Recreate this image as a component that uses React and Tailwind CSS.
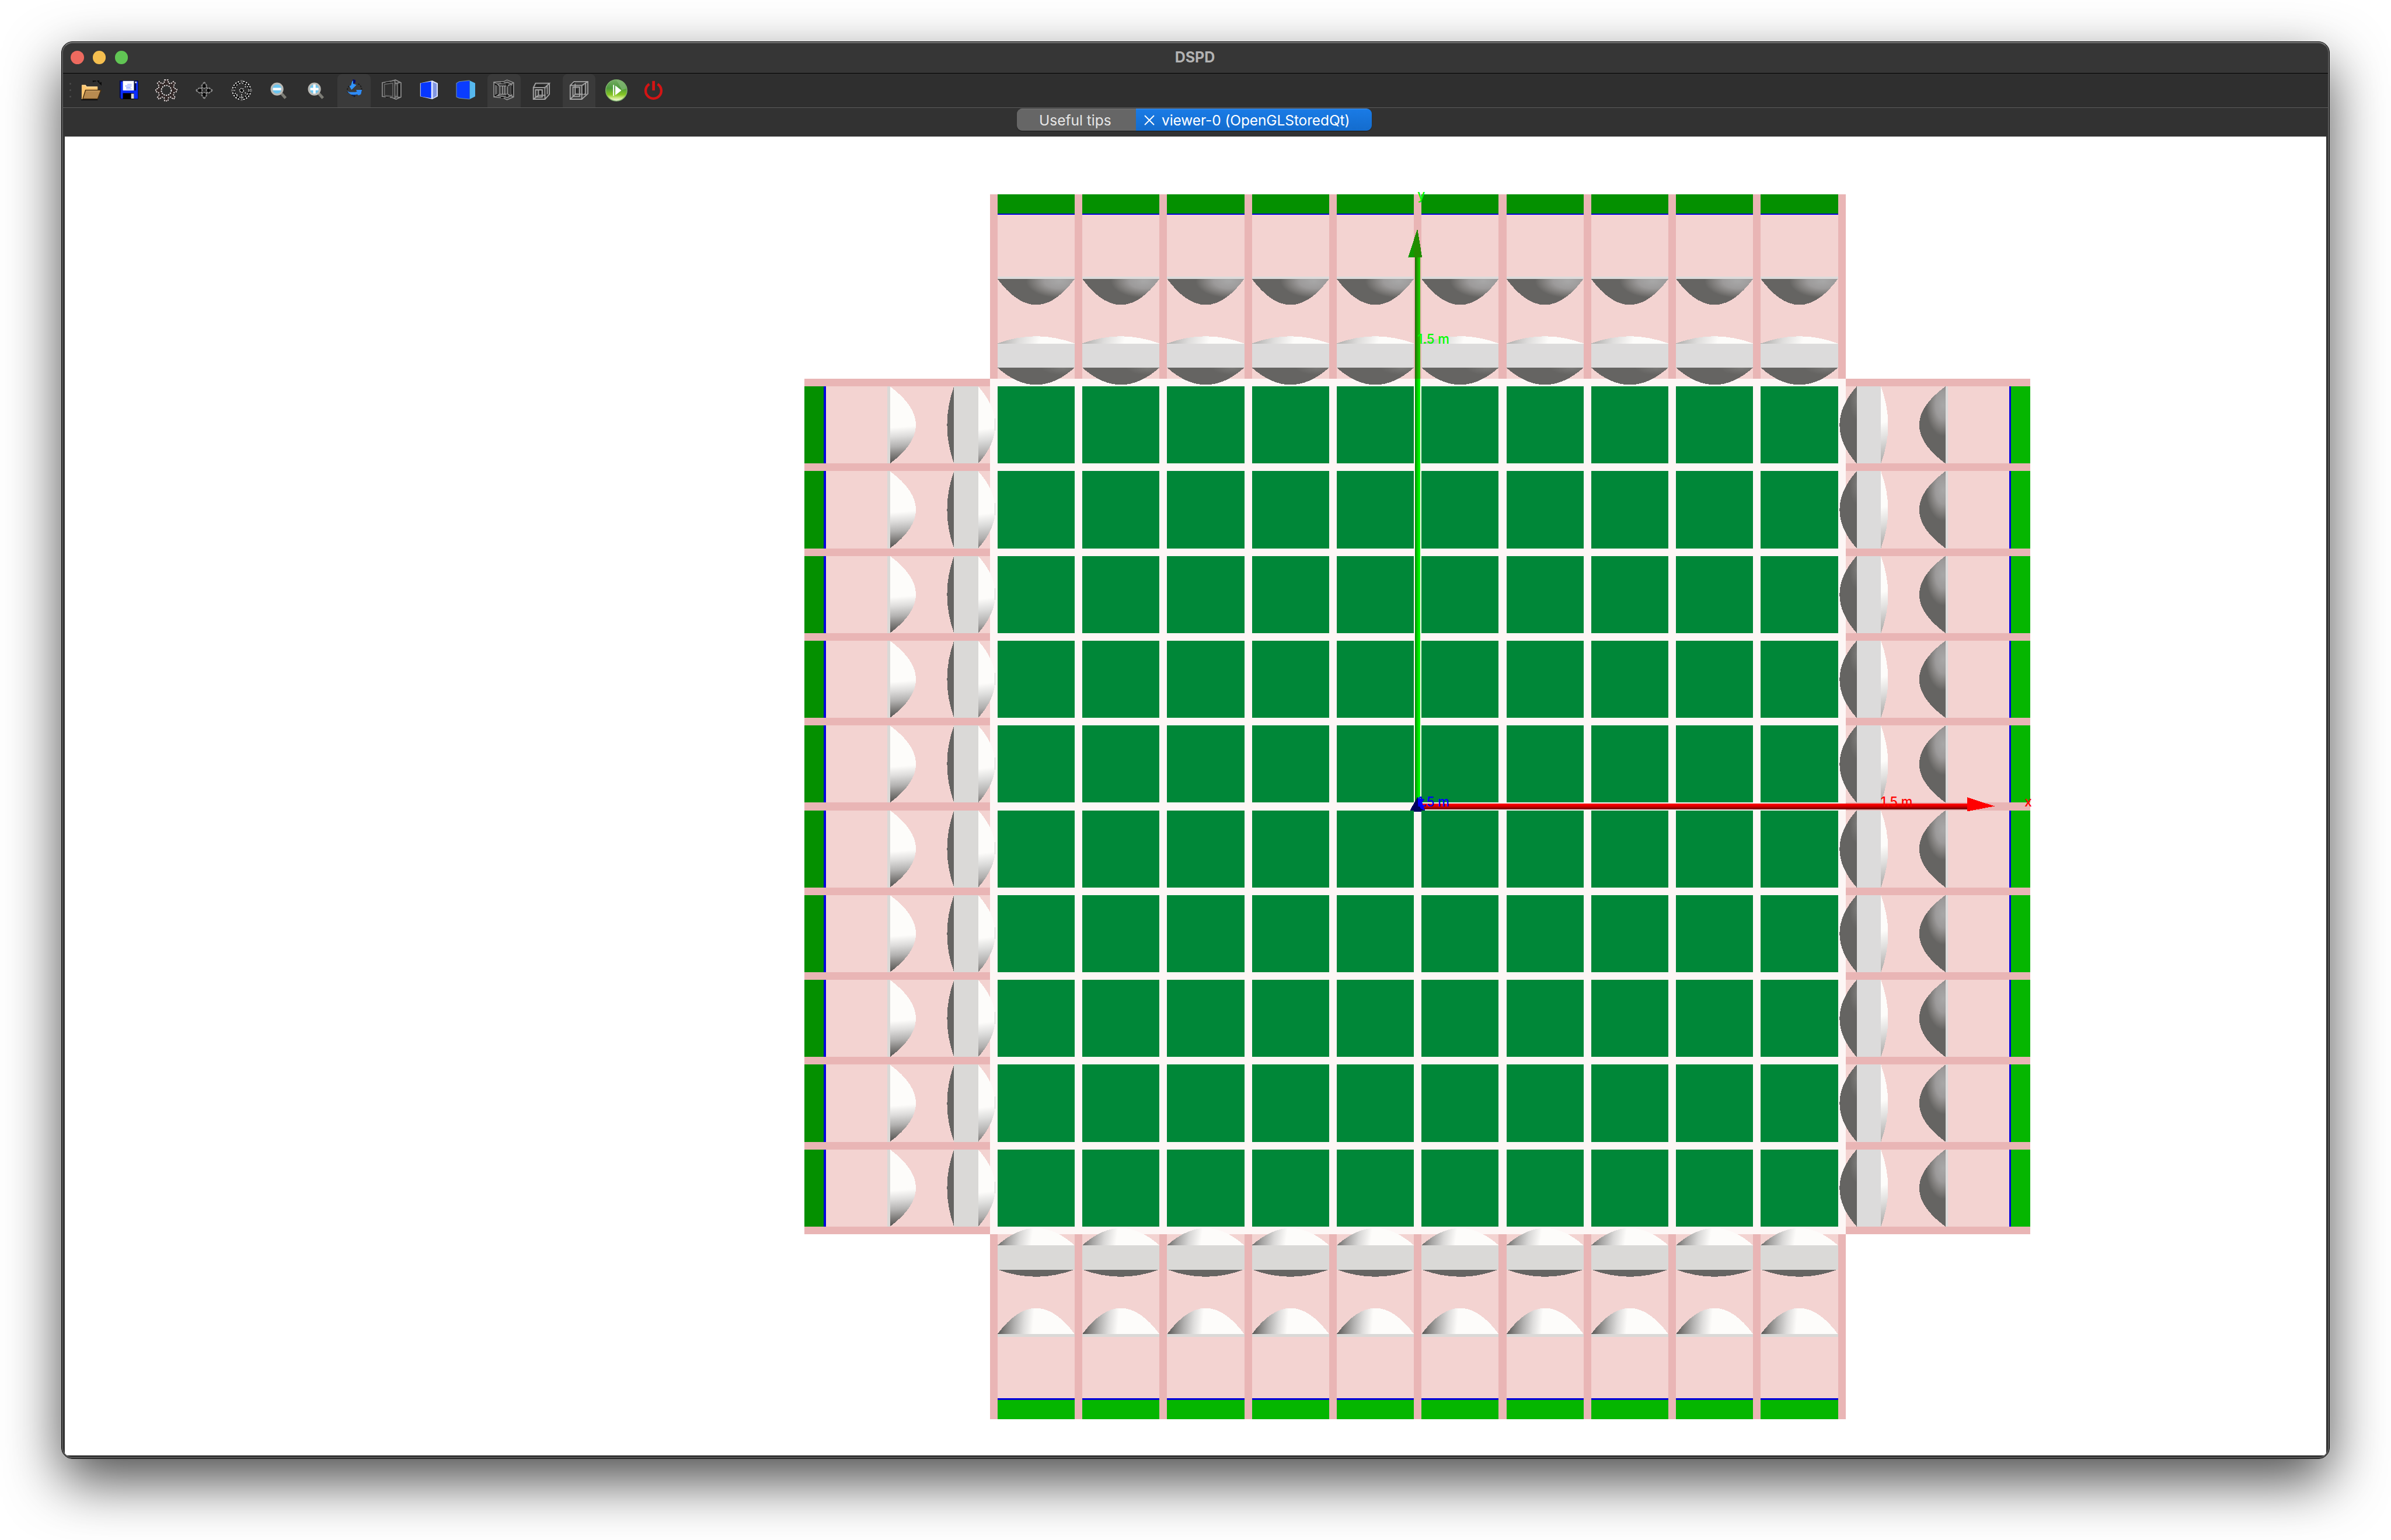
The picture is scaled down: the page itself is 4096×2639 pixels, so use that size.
const TILES = Array.from({ length: 10 }, (_, i) => i);
const PITCH = 153.8;
const CELL = 139.8;
const GRID_X = 1809;
const GRID_Y = 701;

function Icon({ children }) {
  return (
    <svg viewBox="0 0 40 40" className="size-[37.8px]" fill="none">
      {children}
    </svg>
  );
}

function OpenIcon() {
  return (
    <Icon>
      <path d="M23 5v-2h5M30 3h3v3M34 6l3 3v-4" stroke="#0a0a0a" strokeWidth="2" />
      <path d="M2 10h7l2 3h20v7H9L4 36H2z" fill="#ffc670" />
      <path d="M3 11h6l2 3h19" stroke="#ffdc9c" strokeWidth="1.5" />
      <path d="M9 19.500h28l-6 16H4z" fill="#b88b50" stroke="#4a3010" strokeWidth="1.500" />
      <path d="M1 37h30" stroke="#111" strokeWidth="2" />
      <path d="M10 21h25" stroke="#d8ab6c" strokeWidth="1" />
    </Icon>
  );
}

function SaveIcon() {
  return (
    <Icon>
      <path d="M3 2h34v34H6l-3-3z" fill="#000a50" />
      <path d="M5 4h4v16h24V4h3v31H6l-1-2z" fill="#0a2cff" />
      <path d="M9 3h20v17H9z" fill="#fff" />
      <path d="M31 4h3v3h-3z" fill="#ddd" />
      <path d="M17 9h8M13 12h12M15 15h8M15 17.500h10" stroke="#9fb0ff" strokeWidth="1.700" />
      <path d="M9 25h20v11H9z" fill="#000" />
      <path d="M24 26h5v9h-5z" fill="#d8d8d0" />
    </Icon>
  );
}

function GearIcon() {
  return (
    <Icon>
      <path
        d="M17 1h6l1 6 4 1 5-4 3 3-3 5 1 4 5 2v4l-5 2-1 4 3 5-3 3-5-4-4 1-1 6h-6l-1-6-4-1-5 4-3-3 3-5-1-4-5-2v-4l5-2 1-4-3-5 3-3 5 4 4-1z"
        fill="#322827"
        stroke="#e6dede"
        strokeWidth="2"
        strokeDasharray="2.400 1.800"
      />
      <circle cx="20" cy="20" r="9" fill="#2f2f2f" stroke="#f2f2f2" strokeWidth="2" strokeDasharray="2.400 1.800" />
    </Icon>
  );
}

function MoveIcon() {
  return (
    <Icon>
      <path d="M20 5l5 7-2 4h-6l-2-4zM20 35l5-7-2-4h-6l-2 4zM5 20l7-5 4 2v6l-4 2zM35 20l-7-5-4 2v6l4 2z" fill="#151515" stroke="#8e8e8e" strokeWidth="2.200" strokeDasharray="3.500 1.200" />
      <path d="M18 11h4v4h-4zM18 25h4v4h-4zM11 18h4v4h-4zM25 18h4v4h-4z" fill="#000" />
    </Icon>
  );
}

function PickIcon() {
  return (
    <Icon>
      <circle cx="20" cy="20" r="15" stroke="#000" strokeWidth="4" />
      <circle cx="20" cy="20" r="16.500" stroke="#f0f0f0" strokeWidth="2" strokeDasharray="2.800 2.200" />
      <circle cx="20" cy="20" r="13" stroke="#d4d4d4" strokeWidth="1.800" strokeDasharray="2.400 3.200" />
      <path d="M20 1v6M20 33v6M1 20h6M33 20h6" stroke="#5e5e5e" strokeWidth="4" />
      <circle cx="20" cy="20" r="3.500" fill="#000" stroke="#e4e4e4" strokeWidth="1.800" strokeDasharray="2 1.500" />
      <path d="M20 27v6M26 24l4 3M26 14l3-2M12 27l-2 3" stroke="#ddd" strokeWidth="1.800" strokeDasharray="2 2" />
    </Icon>
  );
}

function ZoomIcon({ plus }) {
  return (
    <Icon>
      <path d="M24 25l8 9" stroke="#7d7d76" strokeWidth="5" />
      <circle cx="16.500" cy="17.500" r="10" fill="#6cc6f0" stroke="#b9b9b5" strokeWidth="3.500" />
      <path d="M9 17.500h15" stroke="#fff" strokeWidth="4.500" />
      {plus && <path d="M16.500 9v17" stroke="#fff" strokeWidth="4.500" />}
    </Icon>
  );
}

function SpinIcon() {
  return (
    <Icon>
      <path d="M11 12c-4 4-5 9-1 13M27 8c6 4 8 9 5 16M15 28l5 3 4-3" stroke="#1c1c1c" strokeWidth="2" strokeDasharray="3 2" />
      <path d="M17 0l5 1v5l-4 2z" fill="#000a70" />
      <path d="M16 4l2-2v6l6 2-9 9-4-7 3-1z" fill="#3195ff" />
      <path d="M7 21l4 2h11l3-1-2-3h11l-2 8-4 2-3-2c-5 3-13 2-18-6z" fill="#2f8bf5" />
      <path d="M15 28h8l-4 3z" fill="#0a1c50" />
    </Icon>
  );
}

function BoxOutlineIcon() {
  return (
    <Icon>
      <path d="M3 6l17-3 7-2 10 5v26l-9 4-7-3-18-2zM26 2v33M26 7h4v25h-4M30 7l6-2M30 32l6 1" stroke="#8f8f8f" strokeWidth="1.700" />
      <path d="M7 9l15-2v24L7 29z" stroke="#6c6c6c" strokeWidth="1.500" />
      <path d="M9 6l8-1M9 32l8 1M28 11v17M34 9v21" stroke="#080808" strokeWidth="1.300" />
    </Icon>
  );
}

function BoxFacesIcon() {
  return (
    <Icon>
      <path d="M4 7l22-5 10 5v24l-10 5-22-5z" fill="#dfe6ff" />
      <path d="M5 7l19-3v30L5 31z" fill="#0636ff" />
      <path d="M27 5l7 3v22l-7 4z" fill="#8196e2" />
    </Icon>
  );
}

function BoxSolidIcon() {
  return (
    <Icon>
      <path d="M2 7l5-3 19-2v34l-19-2-5-2z" fill="#0a3cff" />
      <path d="M26 2l10 5v24l-10 5z" fill="#56b8ee" />
      <path d="M2 32V7l5-3 19-2M2 32l5 2 19 2" stroke="#6c8aa0" strokeWidth="1.200" />
    </Icon>
  );
}

function BoxHiddenIcon() {
  return (
    <Icon>
      <path d="M2 5l18-1 6-3 12 5v26l-12 5-6-3-18-2zM6 9l13-2 8-2 7 4v20l-7 4-8-2-13-2zM13 12h14v15H13zM2 5l11 7M2 32l11-5M38 6l-11 6M38 32l-11-5" stroke="#9a9a9a" strokeWidth="1.500" />
      <path d="M18 12v15M22 12v15" stroke="#a8a8a8" strokeWidth="1.500" />
      <path d="M4 8l5 3M4 30l5-3M15 6h5M15 33h5M26 8v5M26 27v5M35 11v16" stroke="#050505" strokeWidth="2" />
    </Icon>
  );
}

function BoxWireIcon({ large }) {
  return large ? (
    <Icon>
      <path d="M4 11h21v25H4zM4 11l7-7h25v22L25 36M25 11l11-7M9 14h12v17H9zM13 8v19M13 27h20M4 36l9-9M32 7v20" stroke="#a4a4a4" strokeWidth="1.900" />
      <path d="M8 9l4-3M28 12v15M16 17v8" stroke="#111" strokeWidth="1.500" />
    </Icon>
  ) : (
    <Icon>
      <path d="M5 15h21v21H5zM5 15l4-8h25l-8 8M34 7v20l-8 9M9 19h12v13H9zM5 36l9-7h11M14 18v11M30 12v15" stroke="#a4a4a4" strokeWidth="2" />
      <path d="M10 12h14M18 20v7M28 17v10" stroke="#111" strokeWidth="1.500" />
    </Icon>
  );
}

function RunIcon() {
  return (
    <Icon>
      <defs>
        <linearGradient id="run" x1="0" y1="0" x2="0" y2="1">
          <stop offset="0" stopColor="#74ab65" />
          <stop offset="0.400" stopColor="#4d9a3c" />
          <stop offset="0.700" stopColor="#86c522" />
          <stop offset="0.860" stopColor="#cfe98a" />
          <stop offset="1" stopColor="#f4f8e4" />
        </linearGradient>
      </defs>
      <circle cx="20" cy="20" r="19.300" fill="url(#run)" stroke="#7fb36d" strokeWidth="1.400" />
      <path d="M20 1a19 19 0 0 1 18 16l-8 2z" fill="#85b876" opacity="0.700" />
      <path d="M15 10v20" stroke="#fff" strokeWidth="2" />
      <path d="M18.500 12v16l10-8z" fill="#fff" stroke="#fff" strokeWidth="1" />
    </Icon>
  );
}

function PowerIcon() {
  return (
    <Icon>
      <path d="M12 8.500a14.200 14.200 0 1 0 15 0" stroke="#d41414" strokeWidth="4.600" />
      <path d="M19.700 3v17" stroke="#d41414" strokeWidth="5" />
    </Icon>
  );
}

const TOOLS = [
  { name: "Open", icon: <OpenIcon /> },
  { name: "Save", icon: <SaveIcon /> },
  { name: "Run settings", icon: <GearIcon /> },
  { name: "Move", icon: <MoveIcon /> },
  { name: "Pick", icon: <PickIcon /> },
  { name: "Zoom out", icon: <ZoomIcon /> },
  { name: "Zoom in", icon: <ZoomIcon plus /> },
  { name: "Rotate", icon: <SpinIcon />, active: true },
  { name: "Hidden line removal", icon: <BoxOutlineIcon /> },
  { name: "Hidden line and surface removal", icon: <BoxFacesIcon /> },
  { name: "Surfaces", icon: <BoxSolidIcon /> },
  { name: "Wireframe", icon: <BoxHiddenIcon />, active: true },
  { name: "Perspective", icon: <BoxWireIcon /> },
  { name: "Orthographic", icon: <BoxWireIcon large />, active: true },
  { name: "Run beam on", icon: <RunIcon /> },
  { name: "Exit", icon: <PowerIcon /> },
];

function TitleBar() {
  return (
    <div className="relative flex h-[54px] items-center justify-center border-b border-black bg-[#363636]">
      <div className="absolute left-[15px] flex gap-[15.100px]">
        <span className="size-[22.700px] rounded-full bg-[#ed6a5f]" />
        <span className="size-[22.700px] rounded-full bg-[#f5bf4f]" />
        <span className="size-[22.700px] rounded-full bg-[#61c554]" />
      </div>
      <span className="-translate-x-[1px] text-[25px] leading-none font-bold text-[#b3b3b3]">DSPD</span>
    </div>
  );
}

function Toolbar() {
  return (
    <div className="flex h-[59px] border-b border-[#5c5c5c] bg-[#2f2f2f] pl-[13px]">
      <div className="flex w-[5.700px] flex-col items-start justify-center gap-[8.300px] pb-px">
        <span className="size-[3px] rounded-full bg-[#4c4c4c]" />
        <span className="size-[3px] rounded-full bg-[#4c4c4c]" />
        <span className="size-[3px] rounded-full bg-[#4c4c4c]" />
      </div>
      {TOOLS.map((t) => (
        <div key={t.name} className="flex w-[64.236px] justify-center pt-px">
          <button
            aria-label={t.name}
            className={`flex h-[56.700px] w-[56.700px] items-center justify-center rounded-t-[8px] ${t.active ? "bg-[#3a3a3a]" : ""}`}
          >
            {t.icon}
          </button>
        </div>
      ))}
    </div>
  );
}

function TabStrip() {
  return (
    <div className="flex h-[49px] items-start justify-center bg-[#323232] pt-px pr-[4px]">
      <div className="flex h-[38px] w-[608px] overflow-hidden rounded-[9px] text-[24.500px] leading-none shadow-[0_1px_1px_rgba(0,0,0,0.5)]">
        <div className="flex w-[204px] items-center border-t border-[#7c7c7c] bg-[#666] pt-px pl-[38px] whitespace-nowrap text-[#e6e6e6]">
          Useful tips
        </div>
        <div className="flex flex-1 items-center border-t border-[#4f9bf0] bg-linear-to-b from-[#1a7be6] to-[#146ccd] pt-px pl-[14px] tracking-[-0.100px] whitespace-nowrap text-white">
          <svg viewBox="0 0 18 18" className="mr-[12px] size-[18px]" stroke="#fff" strokeWidth="1.900">
            <path d="M1 1l16 16M17 1L1 17" />
          </svg>
          viewer-0 (OpenGLStoredQt)
        </div>
      </div>
    </div>
  );
}

function Defs() {
  return (
    <defs>
      <radialGradient id="downLens" gradientUnits="userSpaceOnUse" cx="0" cy="0" r="1" gradientTransform="translate(112 4) scale(60 30)">
        <stop offset="0" stopColor="#a8a8a8" />
        <stop offset="0.450" stopColor="#9c9a9a" />
        <stop offset="0.750" stopColor="#7f7d7b" />
        <stop offset="1" stopColor="#656462" />
      </radialGradient>
      <radialGradient id="downCap" gradientUnits="userSpaceOnUse" cx="0" cy="0" r="1" gradientTransform="translate(118 0) scale(38 13)">
        <stop offset="0" stopColor="#7a7977" />
        <stop offset="1" stopColor="#656462" />
      </radialGradient>
      <radialGradient id="leftLens" gradientUnits="userSpaceOnUse" cx="0" cy="0" r="1" gradientTransform="translate(44 34) scale(31 56)">
        <stop offset="0" stopColor="#a8a8a8" />
        <stop offset="0.450" stopColor="#9c9a9a" />
        <stop offset="0.750" stopColor="#7f7d7b" />
        <stop offset="1" stopColor="#656462" />
      </radialGradient>
      <radialGradient id="leftCap" gradientUnits="userSpaceOnUse" cx="0" cy="0" r="1" gradientTransform="translate(31 24) scale(13 36)">
        <stop offset="0" stopColor="#7a7977" />
        <stop offset="1" stopColor="#656462" />
      </radialGradient>
      <linearGradient id="rightLens" gradientUnits="userSpaceOnUse" x1="0" y1="0" x2="11" y2="138">
        <stop offset="0.540" stopColor="#fdfcfa" />
        <stop offset="0.660" stopColor="#dedddc" />
        <stop offset="0.790" stopColor="#b3b2b1" />
        <stop offset="0.890" stopColor="#858381" />
        <stop offset="1" stopColor="#555452" />
      </linearGradient>
      <linearGradient id="rightCap" gradientUnits="userSpaceOnUse" x1="0" y1="0" x2="16" y2="138">
        <stop offset="0.560" stopColor="#fdfcfa" />
        <stop offset="0.700" stopColor="#dededd" />
        <stop offset="0.880" stopColor="#b0afae" />
        <stop offset="1" stopColor="#777573" />
      </linearGradient>
      <linearGradient id="upLens" gradientUnits="userSpaceOnUse" x1="0" y1="0" x2="140" y2="11">
        <stop offset="0" stopColor="#555452" />
        <stop offset="0.100" stopColor="#858381" />
        <stop offset="0.210" stopColor="#b3b2b1" />
        <stop offset="0.330" stopColor="#dedddc" />
        <stop offset="0.450" stopColor="#fdfcfa" />
      </linearGradient>
      <linearGradient id="upCap" gradientUnits="userSpaceOnUse" x1="0" y1="0" x2="138" y2="20">
        <stop offset="0" stopColor="#6a6967" />
        <stop offset="0.120" stopColor="#a3a2a1" />
        <stop offset="0.270" stopColor="#d8d7d6" />
        <stop offset="0.430" stopColor="#fdfcfa" />
      </linearGradient>
      <linearGradient id="shallowUp" gradientUnits="userSpaceOnUse" x1="0" y1="-2" x2="70" y2="18">
        <stop offset="0" stopColor="#adacaa" />
        <stop offset="0.500" stopColor="#dddcdb" />
        <stop offset="1" stopColor="#fdfcfa" />
      </linearGradient>
      <linearGradient id="shallowRight" gradientUnits="userSpaceOnUse" x1="0" y1="66" x2="18" y2="132">
        <stop offset="0" stopColor="#fdfcfa" />
        <stop offset="0.450" stopColor="#dddcdb" />
        <stop offset="1" stopColor="#adacaa" />
      </linearGradient>
      <linearGradient id="shaftY" x1="0" x2="1" y1="0" y2="0">
        <stop offset="0" stopColor="#008200" />
        <stop offset="0.400" stopColor="#00cc00" />
        <stop offset="0.800" stopColor="#00fa00" />
        <stop offset="1" stopColor="#00ff00" />
      </linearGradient>
      <linearGradient id="shaftYShade" x1="0" x2="1" y1="0" y2="0">
        <stop offset="0" stopColor="#186400" />
        <stop offset="0.400" stopColor="#1ca000" />
        <stop offset="0.800" stopColor="#20c800" />
        <stop offset="1" stopColor="#20d400" />
      </linearGradient>
      <linearGradient id="shaftX" x1="0" x2="0" y1="0" y2="1">
        <stop offset="0" stopColor="#ff0000" />
        <stop offset="0.450" stopColor="#dc0000" />
        <stop offset="1" stopColor="#6a0000" />
      </linearGradient>

      {/* One detector module for each side of the barrel. */}
      <g id="topModule">
        <rect width={CELL} height="335" fill="#f3d3d1" />
        <rect width={CELL} height="35" fill="#049000" />
        <rect y="35" width={CELL} height="3" fill="#0000dc" />
        <rect y="149.300" width={CELL} height="5" fill="#dcdbdb" />
        <path transform="translate(0 154)" d="M0 0H139.800Q69.900 94 0 0z" fill="url(#downLens)" />
        <path transform="translate(0 271)" d="M0 0H139.800Q69.900 -26 0 0z" fill="url(#shallowUp)" />
        <rect y="271" width={CELL} height="44" fill="#dcdbdb" />
        <path transform="translate(0 315)" d="M0 0H139.800Q69.900 62 0 0z" fill="url(#downCap)" />
      </g>
      <g id="bottomModule">
        <rect width={CELL} height="336" fill="#f3d3d1" />
        <path transform="translate(0 20)" d="M0 0H139.800Q69.900 -62 0 0z" fill="url(#upCap)" />
        <rect y="20" width={CELL} height="44" fill="#dad9d7" />
        <path transform="translate(0 64)" d="M0 0H139.800Q69.900 26 0 0z" fill="#656462" />
        <path transform="translate(0 181)" d="M0 0H139.800Q69.900 -94 0 0z" fill="url(#upLens)" />
        <rect y="181" width={CELL} height="5" fill="#dad9d7" />
        <rect y="297" width={CELL} height="4" fill="#0000dc" />
        <rect y="301" width={CELL} height="35" fill="#05b600" />
      </g>
      <g id="leftModule">
        <rect width="336" height={CELL} fill="#f3d3d1" />
        <rect width="35" height={CELL} fill="#049000" />
        <rect x="35" width="4" height={CELL} fill="#0000dc" />
        <rect x="150" width="5" height={CELL} fill="#dad9d7" />
        <path transform="translate(155 0)" d="M0 0V139.800Q94 69.900 0 0z" fill="url(#rightLens)" />
        <path transform="translate(271 0)" d="M0 0V139.800Q-25 69.900 0 0z" fill="#656462" />
        <rect x="271" width="44" height={CELL} fill="#dad9d7" />
        <path transform="translate(315 0)" d="M0 0V139.800Q62 69.900 0 0z" fill="url(#rightCap)" />
        <path transform="translate(315 0)" d="M30.500 58V80" stroke="#d4d3d2" strokeWidth="1.200" />
      </g>
      <g id="rightModule">
        <rect width="335" height={CELL} fill="#f3d3d1" />
        <path transform="translate(-11 0)" d="M31 0V139.800Q-31 69.900 31 0z" fill="url(#leftCap)" />
        <rect x="20" width="44" height={CELL} fill="#dcdbdb" />
        <path transform="translate(64 0)" d="M0 0V139.800Q26 69.900 0 0z" fill="url(#shallowRight)" />
        <path transform="translate(133 0)" d="M48 0V139.800Q-47 69.900 48 0z" fill="url(#leftLens)" />
        <rect x="181" width="5" height={CELL} fill="#dcdbdb" />
        <rect x="297" width="3" height={CELL} fill="#0000dc" />
        <rect x="300" width="35" height={CELL} fill="#05b600" />
      </g>
    </defs>
  );
}

function Detector() {
  return (
    <g>
      <rect x="1795" y="352" width="1552" height="336" fill="#e9b5b5" />
      <rect x="1795" y="2238" width="1552" height="337" fill="#e9b5b5" />
      <rect x="1459" y="687" width="337" height="1552" fill="#e9b5b5" />
      <rect x="3346" y="687" width="336" height="1552" fill="#e9b5b5" />
      <rect x="1795" y="687" width="1552" height="1552" fill="#fdf6f5" />
      {TILES.map((i) => (
        <g key={i}>
          <use href="#topModule" x={GRID_X + i * PITCH} y="352" />
          <use href="#bottomModule" x={GRID_X + i * PITCH} y="2239" />
          <use href="#leftModule" x="1459" y={GRID_Y + i * PITCH} />
          <use href="#rightModule" x="3347" y={GRID_Y + i * PITCH} />
        </g>
      ))}
      {TILES.map((row) =>
        TILES.map((col) => (
          <rect
            key={`${row}-${col}`}
            x={GRID_X + col * PITCH}
            y={GRID_Y + row * PITCH}
            width={CELL}
            height={CELL}
            fill="#008738"
          />
        )),
      )}
    </g>
  );
}

function Axes() {
  return (
    <g fontFamily="Inter, 'Liberation Sans', sans-serif" fontSize="24" fontWeight="500">
      <rect x="2566" y="467" width="10" height="220" fill="url(#shaftYShade)" />
      <rect x="2566" y="687" width="10" height="775" fill="url(#shaftY)" />
      <path d="M2570.500 415L2579 467H2553.500z" fill="#228c00" />
      <path d="M2564 440.500V467H2553.500z" fill="#109a00" />
      <rect x="2577" y="1458" width="990" height="10" fill="url(#shaftX)" />
      <path d="M3567 1446L3617 1462.500L3567 1472z" fill="#ff0000" />
      <path d="M2570.500 1446L2584 1470H2557z" fill="#00005f" />
      <rect x="2564" y="1469" width="14" height="3" fill="#00005f" />
      <path d="M2571 1450L2578 1452L2580 1459L2584 1470L2577 1467L2571 1459z" fill="#0000ff" />
      <g fill="#00ff00">
        <text x="2570.500" y="362">y</text>
        <text x="2570.500" y="624" textLength="58" lengthAdjust="spacingAndGlyphs">1.5 m</text>
      </g>
      <g fill="#0000ff">
        <text x="2570.500" y="1463">z</text>
        <text x="2570.500" y="1463.500" textLength="58" lengthAdjust="spacingAndGlyphs">1.5 m</text>
      </g>
      <g fill="#ff0000">
        <text x="3410.500" y="1463.500" textLength="58" lengthAdjust="spacingAndGlyphs">1.5 m</text>
        <text x="3671.500" y="1463.500">x</text>
      </g>
    </g>
  );
}

function Viewport() {
  return (
    <svg
      viewBox="117.504 247.711 4100.995 2392.423"
      className="block h-[2260px] w-[3874px] bg-white"
      shapeRendering="crispEdges"
    >
      <Defs />
      <Detector />
      <Axes />
    </svg>
  );
}

export default function App() {
  return (
    <div className="h-[2639px] w-[4096px] overflow-hidden bg-white pt-[71px] pl-[105px] font-['Inter','Liberation_Sans',sans-serif]">
      <div className="relative h-[2429px] w-[3886px] rounded-[19px] shadow-[0_38px_96px_rgba(0,0,0,0.7)]">
        <div className="h-full overflow-hidden rounded-[19px] border border-black bg-[#323232]">
          <TitleBar />
          <Toolbar />
          <TabStrip />
          <div className="px-[5px]">
            <Viewport />
          </div>
        </div>
        <div className="pointer-events-none absolute inset-px rounded-[18px] border-2 border-[#5a5a5a] border-t-[#767676]" />
      </div>
    </div>
  );
}
